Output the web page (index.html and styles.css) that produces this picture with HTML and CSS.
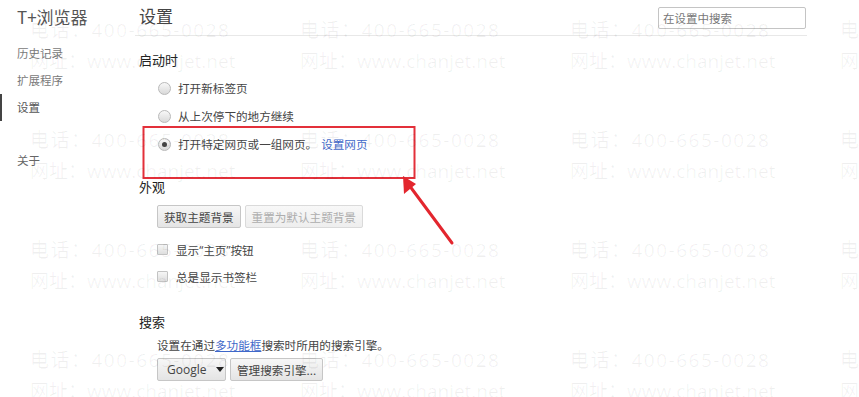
FILE: index.html
```html
<!DOCTYPE html>
<html lang="zh-CN">
<head>
  <meta charset="UTF-8" />
  <title>设置</title>
  <link rel="stylesheet" href="styles.css">
</head>
<body>
  <div class="page">
    <!-- Left navigation -->
    <aside class="sidebar">
      <div class="brand">T+浏览器</div>
      <ul class="nav">
        <li>历史记录</li>
        <li>扩展程序</li>
        <li class="active">设置</li>
        <li class="about">关于</li>
      </ul>
    </aside>

    <!-- Settings content -->
    <main class="content">
      <header class="header">
        <h1>设置</h1>
        <input class="search" type="text" placeholder="在设置中搜索" />
      </header>

      <section class="group">
        <h2>启动时</h2>
        <div class="options">
          <label class="option"><span class="radio"></span>打开新标签页</label>
          <label class="option"><span class="radio"></span>从上次停下的地方继续</label>
          <label class="option"><span class="radio checked"></span>打开特定网页或一组网页。<a class="link">设置网页</a></label>
        </div>
      </section>

      <section class="group appearance">
        <h2>外观</h2>
        <div class="buttons">
          <button class="btn">获取主题背景</button>
          <button class="btn" disabled>重置为默认主题背景</button>
        </div>
        <div class="checks">
          <label class="option"><span class="checkbox"></span>显示<span class="quote">“</span>主页<span class="quote">”</span>按钮</label>
          <label class="option"><span class="checkbox"></span>总是显示书签栏</label>
        </div>
      </section>

      <section class="group search-group">
        <h2>搜索</h2>
        <p class="desc">设置在通过<a class="link underline">多功能框</a>搜索时所用的搜索引擎。</p>
        <div class="buttons">
          <button class="btn select"><span>Google</span><span class="caret"></span></button>
          <button class="btn">管理搜索引擎...</button>
        </div>
      </section>
    </main>
  </div>

  <!-- Annotation: red box and arrow -->
  <svg class="annotation" width="859" height="397" viewBox="0 0 859 397">
    <rect x="143.5" y="127" width="271" height="51" fill="none" stroke="#e3303a" stroke-width="2" />
    <line x1="452" y1="243" x2="409" y2="185" stroke="#e3262e" stroke-width="3" stroke-linecap="round" />
    <polygon points="403,176 416,184 404,194" fill="#e3262e" />
  </svg>

  <!-- Watermark -->
  <div class="watermark">
    <div class="wm-grid">
      <div class="wm"><span class="tel">电话：400-665-0028</span><span>网址：www.chanjet.net</span></div>
      <div class="wm"><span class="tel">电话：400-665-0028</span><span>网址：www.chanjet.net</span></div>
      <div class="wm"><span class="tel">电话：400-665-0028</span><span>网址：www.chanjet.net</span></div>
      <div class="wm"><span class="tel">电话：400-665-0028</span><span>网址：www.chanjet.net</span></div>
      <div class="wm"><span class="tel">电话：400-665-0028</span><span>网址：www.chanjet.net</span></div>
      <div class="wm"><span class="tel">电话：400-665-0028</span><span>网址：www.chanjet.net</span></div>
      <div class="wm"><span class="tel">电话：400-665-0028</span><span>网址：www.chanjet.net</span></div>
      <div class="wm"><span class="tel">电话：400-665-0028</span><span>网址：www.chanjet.net</span></div>
      <div class="wm"><span class="tel">电话：400-665-0028</span><span>网址：www.chanjet.net</span></div>
      <div class="wm"><span class="tel">电话：400-665-0028</span><span>网址：www.chanjet.net</span></div>
      <div class="wm"><span class="tel">电话：400-665-0028</span><span>网址：www.chanjet.net</span></div>
      <div class="wm"><span class="tel">电话：400-665-0028</span><span>网址：www.chanjet.net</span></div>
      <div class="wm"><span class="tel">电话：400-665-0028</span><span>网址：www.chanjet.net</span></div>
      <div class="wm"><span class="tel">电话：400-665-0028</span><span>网址：www.chanjet.net</span></div>
      <div class="wm"><span class="tel">电话：400-665-0028</span><span>网址：www.chanjet.net</span></div>
      <div class="wm"><span class="tel">电话：400-665-0028</span><span>网址：www.chanjet.net</span></div>
    </div>
  </div>
</body>
</html>
```

FILE: styles.css
```css
/* Global */
body {
  margin: 0;
  width: 859px;
  height: 397px;
  overflow: hidden;
  position: relative;
  background: #FFF;
  font-family: "Noto Sans CJK SC", "Open Sans", sans-serif;
  font-size: 12px;
  color: #333;
}
ul, h1, h2, p {
  margin: 0;
  padding: 0;
}

.page {
  display: flex;
}

/* Sidebar */
.sidebar {
  width: 135px;
  padding-top: 7px;
  box-sizing: border-box;
}
.brand {
  padding-left: 17px;
  font-size: 17px;
  line-height: 20px;
  color: #555;
}
.nav {
  list-style: none;
  margin-top: 13px;
}
.nav li {
  height: 27px;
  line-height: 27px;
  padding-left: 15px;
  border-left: 2px solid transparent;
  font-size: 11.5px;
  color: #7a7a7a;
}
.nav li.active {
  color: #555;
  border-left-color: #444;
}
.nav li.about {
  margin-top: 26px;
  color: #666;
}

/* Content */
.content {
  flex: 1;
}
.header {
  width: 672px;
  height: 35px;
  border-bottom: 1px solid #e8e8e8;
  display: flex;
  justify-content: space-between;
  align-items: flex-start;
}
.header h1 {
  margin-left: 4px;
  margin-top: 5px;
  font-size: 17px;
  font-weight: normal;
  line-height: 22px;
  color: #444;
}
.search {
  margin-top: 7px;
  margin-right: 1px;
  width: 148px;
  height: 22px;
  box-sizing: border-box;
  border: 1px solid #c4c4c4;
  border-radius: 2px;
  padding: 0 4px;
  font-family: inherit;
  font-size: 11.5px;
  color: #333;
}
.search::placeholder {
  color: #777;
}

.group {
  padding-left: 4px;
}
.group h2 {
  font-size: 13px;
  font-weight: normal;
  line-height: 18px;
  color: #222;
  margin-top: 15px;
}
.appearance h2 {
  margin-top: 20px;
}
.search-group h2 {
  margin-top: 23px;
}

/* Radios and checkboxes */
.options {
  margin-top: 5px;
  padding-left: 19px;
}
.option {
  display: flex;
  align-items: center;
  height: 28px;
  font-size: 11.6px;
  color: #444;
}
.radio {
  width: 13px;
  height: 13px;
  box-sizing: border-box;
  border: 1px solid #b9b9b9;
  border-radius: 50%;
  background: linear-gradient(#f8f8f8, #d9d9d9);
  margin-right: 7px;
  display: flex;
  align-items: center;
  justify-content: center;
}
.radio.checked::after {
  content: "";
  width: 5px;
  height: 5px;
  border-radius: 50%;
  background: #444;
}
.link {
  color: #3f68c9;
  margin-left: 4px;
}
.link.underline {
  margin-left: 0;
  text-decoration: underline;
}

.checks {
  margin-top: 8px;
  padding-left: 18px;
}
.checks .option {
  height: 27px;
}
.quote {
  font-family: "Open Sans", sans-serif;
}
.checkbox {
  width: 11px;
  height: 11px;
  box-sizing: border-box;
  border: 1px solid #c3c3c3;
  border-radius: 1px;
  background: linear-gradient(#f6f6f6, #dedede);
  margin-right: 8px;
}

/* Buttons */
.buttons {
  display: flex;
  gap: 4px;
  margin-top: 9px;
  padding-left: 18px;
}
.btn {
  height: 23px;
  padding: 0 6px;
  border: 1px solid #c6c6c6;
  border-radius: 2px;
  background: linear-gradient(#f7f7f7, #e4e4e4);
  font-family: inherit;
  font-size: 11.6px;
  color: #444;
}
.btn[disabled] {
  color: #adadad;
  border-color: #dadada;
  background: linear-gradient(#f8f8f8, #eeeeee);
}
.btn.select {
  width: 69px;
  padding: 0 8px 0 9px;
  display: flex;
  align-items: center;
  gap: 10px;
  font-family: "Open Sans", sans-serif;
  font-size: 12px;
}
.caret {
  width: 0;
  height: 0;
  border-left: 4px solid transparent;
  border-right: 4px solid transparent;
  border-top: 5px solid #222;
}

.desc {
  margin-top: 5px;
  padding-left: 18px;
  line-height: 18px;
  font-size: 11.6px;
  color: #444;
}
.search-group .buttons {
  margin-top: 4px;
}

/* Annotation overlay */
.annotation {
  position: absolute;
  left: 0;
  top: 0;
  pointer-events: none;
}

/* Watermark overlay */
.watermark {
  position: absolute;
  left: 0;
  top: 0;
  width: 859px;
  height: 397px;
  overflow: hidden;
  pointer-events: none;
}
.wm-grid {
  padding: 15px 0 0 30px;
  display: grid;
  grid-template-columns: repeat(4, 270px);
  grid-auto-rows: 110px;
  font-family: "Open Sans", "Noto Sans CJK SC", sans-serif;
  font-size: 19px;
  line-height: 31px;
  color: rgba(0, 0, 0, 0.06);
  white-space: nowrap;
}
.wm {
  display: flex;
  flex-direction: column;
}
.wm .tel {
  letter-spacing: 1.5px;
}
```
